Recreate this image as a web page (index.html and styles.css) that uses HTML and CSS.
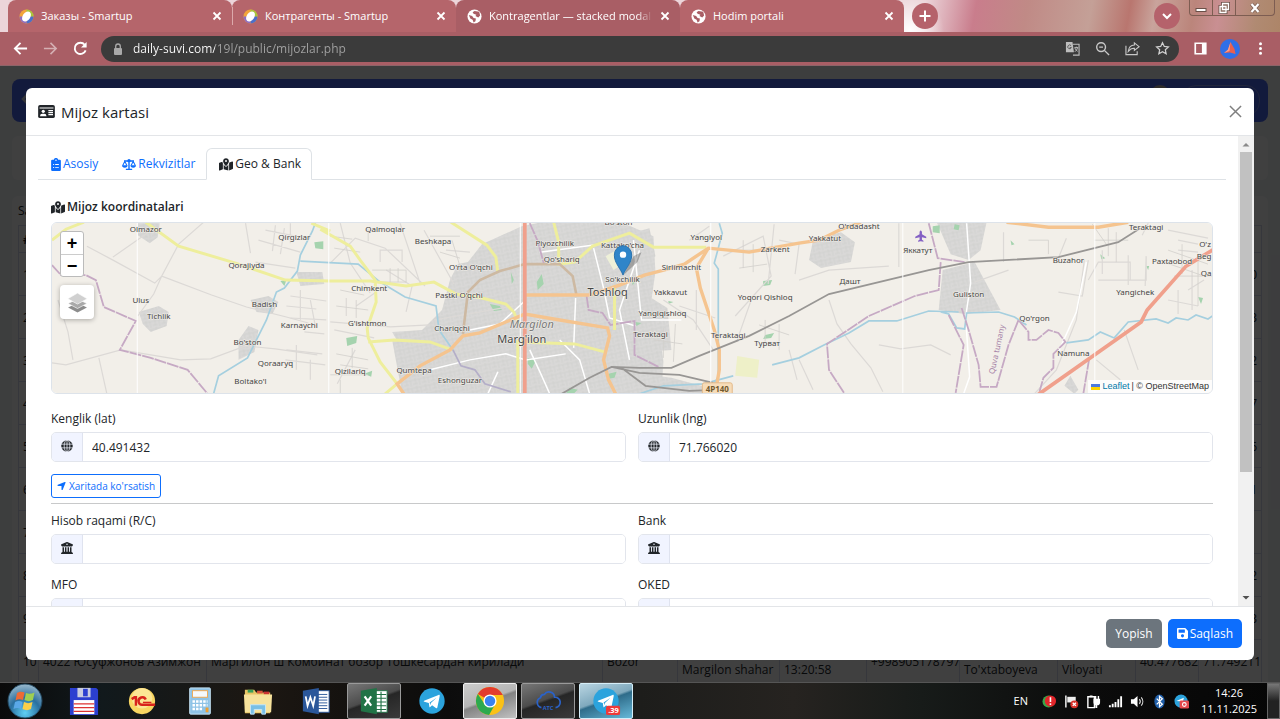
FILE: index.html
```html
<!DOCTYPE html>
<html lang="uz">
<head>
    <meta charset="UTF-8">
    <meta name="viewport" content="width=device-width, initial-scale=1.0">
    <title>Mijozlar</title>
    <link rel="stylesheet" href="styles.css">
</head>
<body>

    <!-- Ikonkalar -->
    <svg class="sprite" aria-hidden="true">
        <symbol id="i-close" viewBox="0 0 10 10"><path d="M1.500 1.500l7 7M8.500 1.500l-7 7" stroke="#fff" stroke-width="1.800" fill="none"/></symbol>
        <symbol id="i-smartup" viewBox="0 0 16 16">
            <circle cx="8" cy="8" r="7.500" fill="#f2a53a"/>
            <path d="M8 .5A7.500 7.500 0 0 1 15.500 8L8 8z" fill="#a7c63c"/>
            <path d="M15.500 8A7.500 7.500 0 0 1 8 15.500L8 8z" fill="#4c6fc9"/>
            <path d="M8 15.500A7.500 7.500 0 0 1 .5 8L8 8z" fill="#8f6fc0"/>
            <ellipse cx="8" cy="8" rx="4" ry="6" transform="rotate(35 8 8)" fill="#fff"/>
        </symbol>
        <symbol id="i-world" viewBox="0 0 16 16">
            <circle cx="8" cy="8" r="7.500" fill="#fff"/>
            <path d="M2 6.500l3.500 1 1.500 2 2.500.5-.5 3-2 1.500-1-3-2.500-1.500zM8 2l5 1 1 4-2 2-3-1.500 1-1.500-3-1-1-1.500z" fill="#a95e65"/>
        </symbol>
        <symbol id="i-globe" viewBox="0 0 16 16">
            <circle cx="8" cy="8" r="7.700" fill="currentColor"/>
            <path d="M0 5.500h16M0 10.500h16M8 0v16" stroke="#f1f4ff" stroke-width="1" fill="none"/>
            <ellipse cx="8" cy="8" rx="3.800" ry="8" stroke="#f1f4ff" stroke-width="1" fill="none"/>
        </symbol>
        <symbol id="i-bank" viewBox="0 0 512 512"><path fill="currentColor" fill-rule="evenodd" d="M243.400 2.600l-224 96c-14 6-21.800 21-18.700 35.800S16.800 160 32 160v8c0 13.300 10.700 24 24 24H456c13.300 0 24-10.700 24-24v-8c15.200 0 28.300-10.700 31.300-25.600s-4.800-29.900-18.700-35.800l-224-96c-8-3.400-17.200-3.400-25.200 0zM128 224H64V420.300c-.6 .3-1.200 .7-1.800 1.100l-48 32c-11.700 7.800-17 22.400-12.900 35.900S17.900 512 32 512H480c14.100 0 26.500-9.200 30.600-22.700s-1.100-28.100-12.900-35.900l-48-32c-.6-.4-1.200-.7-1.800-1.100V224H384V416H344V224H280V416H232V224H168V416H128V224zM256 64a32 32 0 1 1 0 64 32 32 0 1 1 0-64z"/></symbol>
        <symbol id="i-map" viewBox="0 0 576 512"><path fill="currentColor" fill-rule="evenodd" d="M408 120c0 54.600-73.100 151.900-105.200 192c-7.700 9.600-22 9.600-29.600 0C241.100 271.900 168 174.600 168 120C168 53.700 221.700 0 288 0s120 53.700 120 120zm8 80.400c3.500-6.900 6.700-13.800 9.600-20.600c.5-1.200 1-2.500 1.500-3.700l116-46.400C558.900 123.400 576 135 576 152V422.800c0 9.800-6 18.600-15.100 22.300L416 503V200.400zM137.600 138.300c2.400 14.100 7.200 28.300 12.800 41.500c2.900 6.800 6.100 13.700 9.600 20.600V451.800L32.900 502.700C17.100 509 0 497.400 0 480.400V209.600c0-9.800 6-18.600 15.100-22.300l122.600-49zM327.800 332c13.900-17.400 35.700-45.700 56.200-77V504.300L192 449.400V255c20.500 31.300 42.300 59.600 56.200 77c20.500 25.600 59.100 25.600 79.600 0zM288 152a40 40 0 1 0 0-80 40 40 0 1 0 0 80z"/></symbol>
        <symbol id="i-arrow" viewBox="0 0 448 512"><path fill="currentColor" d="M429.600 92.100c4.900-11.900 2.100-25.600-7-34.700s-22.800-11.900-34.700-7l-352 144c-14.200 5.800-22.200 20.800-19.300 35.800s16.100 25.800 31.400 25.800H224V432c0 15.300 10.800 28.400 25.800 31.400s30-5.100 35.800-19.300l144-352z"/></symbol>
        <symbol id="i-save" viewBox="0 32 448 448"><path fill="currentColor" d="M433.941 129.941l-83.882-83.882A48 48 0 0 0 316.118 32H48C21.490 32 0 53.490 0 80v352c0 26.510 21.490 48 48 48h352c26.510 0 48-21.490 48-48V163.882a48 48 0 0 0-14.059-33.941zM224 416c-35.346 0-64-28.654-64-64 0-35.346 28.654-64 64-64s64 28.654 64 64c0 35.346-28.654 64-64 64zm96-304.520V212c0 6.627-5.373 12-12 12H76c-6.627 0-12-5.373-12-12V108c0-6.627 5.373-12 12-12h228.520c3.183 0 6.235 1.264 8.485 3.515l3.480 3.480A11.996 11.996 0 0 1 320 111.480z"/></symbol>
        <symbol id="i-clip" viewBox="0 0 12 16">
            <path fill="currentColor" fill-rule="evenodd" d="M1.500 2H3.300a2.800 2.800 0 0 1 5.400 0H10.500A1.500 1.500 0 0 1 12 3.500v11a1.500 1.500 0 0 1-1.500 1.500h-9A1.500 1.500 0 0 1 0 14.500v-11A1.500 1.500 0 0 1 1.500 2zM6 1.800a.9.9 0 1 0 0 1.800.9.900 0 0 0 0-1.800zM2.500 7.500v1.200h1.200V7.500zM5 7.500v1h4.500v-1zM2.500 11.200v1.200h1.200v-1.200zM5 11.300v1h4.500v-1z"/>
        </symbol>
        <symbol id="i-scale" viewBox="0 0 20 16">
            <path fill="none" stroke="currentColor" stroke-width="2" d="M10 2v12.800M3 3h14M5.500 15h9"/>
            <circle cx="10" cy="2.500" r="2.400" fill="currentColor"/>
            <path fill="none" stroke="currentColor" stroke-width="1.500" d="M1 9.500L4 3.500l3 6M13 9.500l3-6 3 6"/>
            <path fill="currentColor" d="M0 9h8a4 3.500 0 0 1-8 0zM12 9h8a4 3.500 0 0 1-8 0z"/>
        </symbol>
        <symbol id="i-card" viewBox="0 0 18 14">
            <rect width="18" height="14" rx="2" fill="currentColor"/>
            <path d="M1.500 3.300h15M11 6h5M11 8.200h5M11 10.400h5" stroke="#fff" stroke-width="1.200"/>
            <circle cx="5.500" cy="6.800" r="1.700" fill="#fff"/>
            <path d="M2 12a2.500 2.500 0 0 1 2.500-2.500h2A2.500 2.500 0 0 1 9 12z" fill="#fff"/>
        </symbol>
        <symbol id="i-telegram" viewBox="0 0 28 28">
            <circle cx="14" cy="14" r="13.500" fill="#2ba3dd"/>
            <path d="M5.500 13.700L21 7.500c.9-.3 1.400.3 1.200 1.300l-2.500 12c-.2.900-.9 1.100-1.600.6l-4-3-2 2c-.4.400-.8.300-.9-.3l-.6-3.900-4.800-1.500c-.8-.3-.8-.8-.3-1zM11.500 15.600l.7 3 .6-2.500 6-5.600z" fill="#fff"/>
        </symbol>
    </svg>

    <!-- Brauzer -->
    <header class="browser">
        <div class="tabstrip">
            <div class="tab">
                <svg class="favicon"><use href="#i-smartup"/></svg>
                <span class="tab-title">Заказы - Smartup</span>
                <button class="tab-close" aria-label="Close"><svg><use href="#i-close"/></svg></button>
            </div>
            <div class="tab tab-sep">
                <svg class="favicon"><use href="#i-smartup"/></svg>
                <span class="tab-title">Контрагенты - Smartup</span>
                <button class="tab-close" aria-label="Close"><svg><use href="#i-close"/></svg></button>
            </div>
            <div class="tab tab-active">
                <svg class="favicon"><use href="#i-world"/></svg>
                <span class="tab-title tab-fade">Kontragentlar — stacked modal (</span>
                <button class="tab-close" aria-label="Close"><svg><use href="#i-close"/></svg></button>
            </div>
            <div class="tab">
                <svg class="favicon"><use href="#i-world"/></svg>
                <span class="tab-title">Hodim portali</span>
                <button class="tab-close" aria-label="Close"><svg><use href="#i-close"/></svg></button>
            </div>
            <button class="round-btn" aria-label="New tab"><svg viewBox="0 0 12 12"><path d="M6 .5v11M.5 6h11" stroke="#fff" stroke-width="2"/></svg></button>
            <div class="strip-right">
                <button class="round-btn" aria-label="Search tabs"><svg viewBox="0 0 12 12"><path d="M2 4l4 4 4-4" stroke="#fff" stroke-width="2" fill="none"/></svg></button>
                <div class="win-controls">
                    <button aria-label="Minimize"><svg viewBox="0 0 14 12"><rect x="2" y="6.500" width="10" height="3" fill="#fff" stroke="#6b5048"/></svg></button>
                    <button aria-label="Restore"><svg viewBox="0 0 14 12"><path d="M5.500 1.500h6v6h-6zM3 4.500h6v6H3z" fill="none" stroke="#6b5048" stroke-width="3"/><path d="M5.500 1.500h6v6h-6zM3 4.500h6v6H3z" fill="#8d6e62" stroke="#fff" stroke-width="1.300"/></svg></button>
                    <button class="win-close" aria-label="Close window"><svg viewBox="0 0 14 12"><path d="M3.500 2l7 8M10.500 2l-7 8" stroke="#7d6055" stroke-width="3.600"/><path d="M3.500 2l7 8M10.500 2l-7 8" stroke="#fff" stroke-width="2.200"/></svg></button>
                </div>
            </div>
        </div>

        <div class="toolbar">
            <button class="tool" aria-label="Back"><svg viewBox="0 0 16 16"><path d="M15 8H2.500M8 2L2 8l6 6" fill="none" stroke="#fff" stroke-width="2"/></svg></button>
            <button class="tool tool-off" aria-label="Forward"><svg viewBox="0 0 16 16"><path d="M1 8h12.500M8 2l6 6-6 6" fill="none" stroke="#fff" stroke-width="1.700"/></svg></button>
            <button class="tool" aria-label="Reload"><svg viewBox="0 0 16 16"><path d="M13.500 10A6 6 0 1 1 12.500 4" fill="none" stroke="#fff" stroke-width="2"/><path d="M14.500 1v6h-6z" fill="#fff"/></svg></button>
            <div class="omnibox">
                <svg class="lock" viewBox="0 0 10 12"><rect x="1" y="5" width="8" height="7" rx="1" fill="#a9a9a9"/><path d="M2.700 5V3.300a2.300 2.300 0 0 1 4.600 0V5" fill="none" stroke="#a9a9a9" stroke-width="1.300"/></svg>
                <input class="address" type="text" aria-label="Address" value="daily-suvi.com/19l/public/mijozlar.php">
                <button class="tool" aria-label="Translate"><svg viewBox="0 0 16 16"><path d="M1 1h7l1.500 11H1z" fill="#bdbdbd"/><path d="M8.500 3.500H15V15H8.500" fill="none" stroke="#bdbdbd" stroke-width="1.200"/><path d="M6.500 5a2 2 0 1 0 .3 2H5" fill="none" stroke="#555" stroke-width="1"/><path d="M10 7h4M12 6v1M13.500 7c-.5 2-1.500 3.500-3 4.500M10.500 7.500c.5 1.500 1.500 2.500 3 3.500" stroke="#bdbdbd" fill="none"/></svg></button>
                <button class="tool" aria-label="Zoom"><svg viewBox="0 0 16 16"><circle cx="6.500" cy="6.500" r="4.700" fill="none" stroke="#c8c8c8" stroke-width="1.500"/><path d="M10 10l5 5M4.500 6.500h4" stroke="#c8c8c8" stroke-width="1.500"/></svg></button>
                <button class="tool" aria-label="Share"><svg viewBox="0 0 16 16"><path d="M1 5v9.500h12V11M10 2l5 4-5 4V7.700C7 7.500 5 9 3.500 11 4 7 6.500 4.500 10 4.300z" fill="none" stroke="#c8c8c8" stroke-width="1.200"/></svg></button>
                <button class="tool" aria-label="Bookmark"><svg viewBox="0 0 16 16"><path d="M8 1.800l1.900 4 4.400.5-3.300 3 .9 4.400L8 11.500l-3.900 2.200.9-4.400-3.300-3 4.400-.5z" fill="none" stroke="#d0d0d0" stroke-width="1.300"/></svg></button>
            </div>
            <button class="tool" aria-label="Side panel"><svg viewBox="0 0 16 16"><path fill="#fff" fill-rule="evenodd" d="M1.500 1.500h13v13h-13zM3.300 3.300v9.400h6.200V3.300z"/></svg></button>
            <button class="tool avatar" aria-label="Profile"><svg viewBox="0 0 20 20"><circle cx="10" cy="10" r="10" fill="#2f6fe8"/><path d="M10.500 3L8 11l-4 3 6-.5 5.500 1.500-1-5z" fill="#e8604f"/><path d="M10.500 3L9.500 12l-5.500 2 4-3.500z" fill="#ff9c8a"/></svg></button>
            <button class="tool" aria-label="Menu"><svg viewBox="0 0 16 16"><circle cx="8" cy="3" r="1.600" fill="#fff"/><circle cx="8" cy="8" r="1.600" fill="#fff"/><circle cx="8" cy="13" r="1.600" fill="#fff"/></svg></button>
        </div>
    </header>

    <main class="page">
        <!-- Orqa fon: mijozlar jadvali -->
        <div class="page-back">
            <div class="navbar">
                <svg class="nav-back" viewBox="0 0 12 14"><path d="M8 2L3 7l5 5" fill="none" stroke="#cfd3e6" stroke-width="2.500"/></svg>
                <span class="nav-user"></span>
                <span class="nav-pill"></span>
            </div>
            <div class="card card-filter"></div>
            <div class="card card-table">
                <div class="card-title">Sahifa</div>
                <table class="clients">
                    <colgroup>
                        <col class="c-num"><col class="c-name"><col><col class="c-obj"><col class="c-city"><col class="c-time"><col class="c-phone"><col class="c-agent"><col class="c-reg"><col class="c-geo"><col class="c-geo">
                    </colgroup>
                    <tr><th>#</th><th></th><th></th><th></th><th></th><th></th><th></th><th></th><th></th><th></th><th></th></tr>
                    <tr><td>1</td><td></td><td></td><td></td><td></td><td></td><td></td><td></td><td></td><td></td><td class="num">0</td></tr>
                    <tr><td>2</td><td></td><td></td><td></td><td></td><td></td><td></td><td></td><td></td><td></td><td class="num">3</td></tr>
                    <tr><td>3</td><td></td><td></td><td></td><td></td><td></td><td></td><td></td><td></td><td></td><td class="num">2</td></tr>
                    <tr><td>4</td><td></td><td></td><td></td><td></td><td></td><td></td><td></td><td></td><td></td><td class="num">7</td></tr>
                    <tr><td>5</td><td></td><td></td><td></td><td></td><td></td><td></td><td></td><td></td><td></td><td class="num">6</td></tr>
                    <tr><td>6</td><td></td><td></td><td></td><td></td><td></td><td></td><td></td><td></td><td></td><td class="num">1</td></tr>
                    <tr><td>7</td><td></td><td></td><td></td><td></td><td></td><td></td><td></td><td></td><td></td><td></td></tr>
                    <tr><td>8</td><td></td><td></td><td></td><td></td><td></td><td></td><td></td><td></td><td></td><td class="num">2</td></tr>
                    <tr><td>9</td><td></td><td></td><td></td><td></td><td></td><td></td><td></td><td></td><td></td><td class="num">3</td></tr>
                    <tr><td>10</td><td>4022 Юсуфжонов Азимжон</td><td>Маргилон ш Комбинат бозор Тошкесардан кирилади</td><td>Bozor</td><td>Farg'ona<br>Margilon shahar</td><td>11.11.2025<br>13:20:58</td><td>+998905178797</td><td>Dilnoza<br>To'xtaboyeva</td><td>Farg'ona<br>Viloyati</td><td class="num">40.477682</td><td class="num">71.749211</td></tr>
                </table>
            </div>
        </div>

        <div class="backdrop">
            <div class="modal" role="dialog" aria-labelledby="modalTitle">
                <div class="modal-header">
                    <svg class="title-icon"><use href="#i-card"/></svg>
                    <h5 class="modal-title" id="modalTitle">Mijoz kartasi</h5>
                    <button class="btn-close" aria-label="Yopish"><svg viewBox="0 0 14 14"><path d="M1 1l12 12M13 1L1 13" stroke="#7f7f7f" stroke-width="1.600"/></svg></button>
                </div>

                <div class="modal-main">
                    <div class="modal-body">
                        <nav class="nav-tabs">
                            <a class="nav-link" href="#asosiy"><svg class="ic-clip"><use href="#i-clip"/></svg>Asosiy</a>
                            <a class="nav-link" href="#rekvizitlar"><svg class="ic-wide"><use href="#i-scale"/></svg>Rekvizitlar</a>
                            <a class="nav-link active" href="#geo"><svg class="ic-wide"><use href="#i-map"/></svg>Geo &amp; Bank</a>
                        </nav>

                        <div class="tab-pane">
                            <h6 class="section-title"><svg class="ic-wide"><use href="#i-map"/></svg>Mijoz koordinatalari</h6>

                            <div class="map">
                                <svg class="map-canvas" viewBox="51 222 1163 172" preserveAspectRatio="xMidYMid slice">
                                    <defs>
                                        <pattern id="streets" width="9" height="8" patternUnits="userSpaceOnUse" patternTransform="rotate(-12)">
                                            <rect width="9" height="8" fill="#d9d8d7"/>
                                            <path d="M0 2h9M0 6h5M3 0v6M7 2v6" stroke="#cfcecd" stroke-width=".7"/>
                                        </pattern>
                                    </defs>
                                    <rect x="51" y="222" width="1163" height="172" fill="#f2efe9"/>

                                    <!-- aholi punktlari -->
                                    <g fill="url(#streets)">
                                        <path d="M468 262l14-18 40-18 20-4h80l32 14 2 36-4 28 8 28 4 34-2 32H430l-20-30-10-18-8-14 30-2 20-20 8-30 8-16z"/>
                                        <path d="M392 340l40-4 20 20-14 38h-36z"/>
                                        <path d="M620 236l30-8 6 28-24 14zM632 306l20-8 16 10 4 42-30 2z"/>
                                        <path d="M814 240l28-8 14 10-4 20-30 6-12-8z"/>
                                        <path d="M938 222h50l-6 28-12 10-18-6z"/>
                                        <path d="M944 270l32-8 12 22 14 26-36 4-26-4z"/>
                                        <path d="M137 223h22l-2 14-8 6-12-8zM138 312l20-6 10 6-2 14-16 6-8-8zM250 300l18-4 10 6-6 12-16-2zM238 340l10-14 10 4-4 22-16 8zM296 272h26l2 12-24 2z"/>
                                        <path d="M1066 386l6-10 8 14-4 4zM562 378l30-10 80 10 30 8 10 8H558z"/>
                                    </g>

                                    <!-- dalalar va parklar -->
                                    <g fill="#a5d3ae">
                                        <path d="M314 242l9-1v8l-8-1zM280 281l6-1-2 6zM346 338l11-2-1 7-9 3zM364 374l8-3-1 6zM490 304l10 2 2 4-8 1zM537 282l5-8 2 10-6 6zM511 272l3 8-2 4zM528 358l8 3-4 8-4-5zM632 278l4 4-3 3zM764 281l9-1-2 5-7 1zM766 335l9-2-3 5-8 1zM934 226l7-1v8l-7-1zM956 224l5 1-1 5-5-1zM1012 240l4 4-3 1zM1102 254l5 4-4 1zM1148 266h3l-1 4zM1200 297l5 1-2 6zM570 388l8 2-4 4h-8zM609 374l8-2-2 6-6 1zM636 322l6 1-5 3zM669 301l5 1-5 2z"/>
                                    </g>
                                    <path d="M738 356l22 4-2 18-22-2z" fill="#eef0c8"/>
                                    <path d="M606 256l14-8 6 14-12 8z" fill="#eef0d8"/>

                                    <!-- kichik yo'llar -->
                                    <g fill="none" stroke="#dcd9d6" stroke-width="1.200">
                                        <path d="M86 246l28 15 40 22 7-7 17-32 25-22M112 257l40-28M161 276l50 19 35 12 40 10 22 6M161 276l-8 18-16 22M51 363l14 2 55-15 60 10 30-1 35-13 30 3 42 6M57 300l10 32 5 28M98 358l8 36"/>
                                        <path d="M245 223l5 30M258 240l42 12M265 230l30 6M275 225l-3 26M284 228l-4 26M290 223v20M255 262l40 6M290 296l36 5M286 306l30 3M290 318l36 2M300 290v30M310 300l5 26M304 332l20 2M286 350l36 4M285 360l40 5M296 345v25M310 360v20"/>
                                        <path d="M331 262l24-24 30 10 40 38M340 223l10 40 20 30M356 306l20-14M330 322l60 5 40-2M334 330l40 8M355 350l-18 34M380 262v-12h22v12M386 270l26 16-6 26M400 223l20 60M424 230l30 54M446 250l24 2M434 320l80-14"/>
                                        <path d="M680 306l36 12M664 300l30 20 20 30M697 290v40M690 240l20-14M724 256l40-20 8 40-36 40M752 300l-14 40M775 224l-6 60M780 240l20 4-4 30M830 300l8 24 14 20 20 24 12 24M800 280l30-10 60-4M900 223v44M880 345l22 4 30-4 20 10M790 350l8 30M800 360l14 30"/>
                                        <path d="M1005 232v30M1060 258l8-20M1086 260l-8 60-20 50-22 24M1104 250v24M1060 292l24 4 6-36M1090 280l10-18h32v18M1100 280h48v-24M1130 285v-30M1148 256l-1 30M1150 223l-6 12M1180 240l20 4M1170 230l40 8M1180 250l20 2M1190 290l16-10M1170 300l30 6M1180 290v24M1194 270v40M1126 330l14 40M1098 360l24 20M1010 270l-34 12"/>
                                    </g>
                                    <g fill="none" stroke="#fff" stroke-width="1.500">
                                        <path d="M430 370l40-10 36-6 20 6 40-6M470 330l30-6 26-24M594 248l10 40 6 30 26 8M640 250l-20 60 10 50M560 340l20 20 10 34M530 350l12 26 8 18M576 298l-2 50M498 372l-10 22M634 240l8 80 40 0M540 252l60-8M968 223l4 60-5 34 4 60-6 17M1088 262l-10 50-18 40"/>
                                    </g>
                                    <g fill="none" stroke="#d2cfcc" stroke-width=".8">
                                        <path d="M330 236l22 3M334 248l26 4M368 241v-12M372 270h34v12h-30M390 268v16M398 268v14M340 290l24 5M336 306l32 4M346 298v18M356 300v18M336 354l32 6M340 365l28 4M352 348v20M430 236h30M452 240l8 26M440 252l20 6M330 375h38M340 380v14M655 340l28 4M664 328v30M676 324l-2 38M736 250h30M744 240v28M754 244v28M740 268l28-4M760 325l30 10M766 320v26M780 324v26M1030 240h20v14M1094 224l14 20M1096 240h34M1110 228v28M1118 232v30M1170 250l40 14M1166 262l40 14M1184 244v30M1176 276h38M1200 260v46"/>
                                    </g>

                                    <!-- suv -->
                                    <g fill="none" stroke="#a5cfdf" stroke-width="1.700">
                                        <path d="M315 223l-3 8-12 24-3 16-13 17-8 4-10 28-19 38-29 18-5 18M300 261l58 3 22 18 25 15 31 9 3 24 14 20M720 223l3 10-8 30 4 6v108l-10 16M773 365l27-7 25-13 25-12 20-12h28l32-10 30 1M942 312l8 2 8 14 8 1 2-16 32-1 16 5 12 8M1068 343l22-3 12-8 14 6 14-16 28-3 12 4 8-5 12 2 8-5 12 4 6-4 10 0M640 394l24-8 40-2 30-8"/>
                                        <path d="M453 350l8 16 14 4 10 14 26 8" stroke="#b4aec8"/>
                                    </g>

                                    <!-- tuman chegaralari -->
                                    <g fill="none" stroke="#c6a9c4" stroke-width="1.800" stroke-dasharray="12 1">
                                        <path d="M51 265l9 10h25l10 5 8 27 32 14-16 29 31 8 37 12 20 24M530 223l8 18 6 22M587 296l2 14 14 3 8 12 24-4v34l24 12M930 223l9 35 27 4M942 262l-2 28-24 6-46 20-42 28 2 26 15 23M950 315l15 30-8 48M963 308l7 22 10 35 2 22h16l12-42 10-25 10 12v8h8l12-10 10 3 7 9-12 12v14l-10 10-4 14M1091 358l-6 36"/>
                                    </g>

                                    <!-- katta yo'llar -->
                                    <g fill="none" stroke="#eeee9c" stroke-width="3">
                                        <path d="M51 240l14-11 18-7M145 222l33 24 57 17 50 17 45 1h40l36 5 28-4 22 12 26 4 24 6 8 8 5 12M320 229l30 17 10 14 15 20 1 22-9 26 1 10 12 24 17 22-12 10M368 342l26-2 36 2 22 8M451 222l36 23 9 12 2 15M554 222l5 20v22l16-2 18-16 37-13 24 14h53M518 340v54M521 342l54 2 30 8M311 223l19 8M615 285v45"/>
                                    </g>
                                    <g fill="none" stroke="#cdb9a2" stroke-width="2.600">
                                        <path d="M463 334l5-42 12-12 20-9 25-7h35l13 12 4 20"/>
                                    </g>
                                    <g fill="none" stroke="#f5c48f" stroke-width="3.400">
                                        <path d="M405 396l-8-12 23-18 30-16 13-14 17-3 45-19 35 6 48 8 2 8-6 24 5 20 8 16M525 295h65l30-10 25-10 23-6 17-5 24-16 41 4 50-9 20-3 20-10 22-8M709 248l-12 20 4 20 14 42 5 20v20l-4 24M1008 222l42 5h50l30-5"/>
                                    </g>
                                    <g fill="none" stroke="#f0a08c" stroke-width="3.800">
                                        <path d="M525 222v172M1038 396l105-74 6-12 39-44 28-17"/>
                                    </g>

                                    <!-- temir yo'l -->
                                    <g fill="none" stroke="#989694" stroke-width="1.800">
                                        <path d="M562 394l28-16 22-11 28 1h32l28-12 50-20 40-20 40-22 100-24 40-8 90-5 60-15 22-14M612 367l28 6 40 2 34 8M622 368l24 18 44 5 26-1"/>
                                    </g>

                                    <g stroke="#fff" stroke-width="1"><path d="M136.500 222v172M328.500 222v172M520.500 222v172M711.500 222v172M904 222v172M1096.500 222v172"/></g>

                                    <g class="places">
                                        <text x="145" y="232">Olmazor</text><text x="294" y="240">Qirgizlar</text>
                                        <text x="246" y="268">Qorajiyda</text><text x="140" y="303">Ulus</text>
                                        <text x="158" y="319">Tichlik</text><text x="264" y="307">Badish</text>
                                        <text x="299" y="328">Karnaychi</text><text x="247" y="345">Bo'ston</text>
                                        <text x="275" y="366">Qoraaryq</text><text x="250" y="384">Boltako'l</text>
                                        <text x="385" y="232">Qalmoqlar</text><text x="433" y="244">Beshkapa</text>
                                        <text x="471" y="270">O'rta O'qchi</text><text x="369" y="291">Chimkent</text>
                                        <text x="459" y="298">Pastki O'qchi</text><text x="367" y="326">G'ishtmon</text>
                                        <text x="452" y="331">Chariqchi</text><text x="350" y="374">Qizilariq</text>
                                        <text x="414" y="373">Qumtepa</text><text x="460" y="383">Eshonguzar</text>
                                        <text x="555" y="246">Piyozchilik</text><text x="562" y="262">Qo'shariq</text>
                                        <text x="623" y="248">Kattako'cha</text><text x="623" y="282">So'kchilik</text>
                                        <text x="619" y="225">Bo'ston</text>
                                        <text x="707" y="240">Yangiyol</text><text x="776" y="252">Zarkent</text>
                                        <text x="682" y="270">Sirlimachit</text><text x="671" y="295">Yakkavut</text>
                                        <text x="663" y="316">Yangiqishloq</text><text x="651" y="337">Teraktagi</text>
                                        <text x="729" y="338">Teraktagi</text><text x="766" y="300">Yoqori Qishloq</text>
                                        <text x="768" y="346">Турват</text><text x="851" y="284">Дашт</text>
                                        <text x="826" y="241">Yakkatut</text><text x="860" y="229">O'rdadasht</text>
                                        <text x="919" y="253">Яккатут</text><text x="970" y="297">Guliston</text>
                                        <text x="1070" y="263">Buzahor</text><text x="1036" y="321">Qo'rgon</text>
                                        <text x="1075" y="356">Namuna</text><text x="1148" y="230">Teraktagi</text>
                                        <text x="1174" y="264">Paxtaobod</text><text x="1137" y="295">Yangichek</text>
                                        <text x="1207" y="247">O'z</text><text x="1206" y="259">Beg</text><text x="1208" y="276">Qa</text>
                                        <text class="town" x="608" y="296">Toshloq</text>
                                        <text class="town town-it" x="532" y="328">Margilon</text>
                                        <text class="town" x="522" y="343">Marg'ilon</text>
                                        <text class="district" x="1001" y="350" transform="rotate(-78 1001 350)">Quva tumany</text>
                                    </g>

                                    <path d="M922 230l1.200 1.500v2.500l4.300 2.500v1.500l-4.300-1v2.500l1.500 1.200v1l-2.700-.6-2.700.6v-1l1.500-1.200v-2.500l-4.300 1V236.500l4.300-2.500v-2.500z" fill="#8461c4"/>
                                    <rect x="703" y="383" width="30" height="14" rx="2" fill="#f7dcb8" stroke="#e3b98a"/>
                                    <text class="shield" x="718" y="392">4P140</text>

                                    <!-- marker -->
                                    <path d="M624 275l14-13 4-10-8 4z" fill="#000" opacity=".25"/>
                                    <path d="M623.500 275c-2-6-8.700-12-8.700-20a8.700 9.500 0 0 1 17.400 0c0 8-6.700 14-8.700 20z" fill="#2f85c9" stroke="#2a72ad"/>
                                    <circle cx="623.500" cy="254.500" r="3.200" fill="#fff"/>
                                </svg>

                                <div class="map-controls">
                                    <div class="zoom">
                                        <button aria-label="Zoom in">+</button>
                                        <button aria-label="Zoom out">−</button>
                                    </div>
                                    <button class="layers" aria-label="Layers">
                                        <svg viewBox="0 0 20 20"><path d="M10 10.500l9 4.300-9 4.700-9-4.700z" fill="#8c8c8c"/><path d="M10 6.500l9 4.500-9 4.700L1 11z" fill="#a9a9a9" stroke="#fff" stroke-width=".6"/><path d="M10 1l9.300 5.500L10 11.500.7 6.500z" fill="#d0d0d0" stroke="#fff" stroke-width=".6"/></svg>
                                    </button>
                                </div>
                                <div class="attribution">
                                    <svg viewBox="0 0 9 6"><rect width="9" height="3" fill="#4c7be1"/><rect y="3" width="9" height="3" fill="#ffd500"/></svg>
                                    <a href="#leaflet">Leaflet</a> | © OpenStreetMap
                                </div>
                            </div>

                            <div class="form-row">
                                <div class="field">
                                    <label for="lat">Kenglik (lat)</label>
                                    <div class="input-group">
                                        <span class="addon"><svg><use href="#i-globe"/></svg></span>
                                        <input type="text" id="lat" value="40.491432">
                                    </div>
                                </div>
                                <div class="field">
                                    <label for="lng">Uzunlik (lng)</label>
                                    <div class="input-group">
                                        <span class="addon"><svg><use href="#i-globe"/></svg></span>
                                        <input type="text" id="lng" value="71.766020">
                                    </div>
                                </div>
                            </div>

                            <button class="btn-outline"><svg><use href="#i-arrow"/></svg>Xaritada ko'rsatish</button>

                            <hr class="divider">

                            <div class="form-row form-bank">
                                <div class="field">
                                    <label for="account">Hisob raqami (R/C)</label>
                                    <div class="input-group">
                                        <span class="addon"><svg><use href="#i-bank"/></svg></span>
                                        <input type="text" id="account">
                                    </div>
                                </div>
                                <div class="field">
                                    <label for="bank">Bank</label>
                                    <div class="input-group">
                                        <span class="addon"><svg><use href="#i-bank"/></svg></span>
                                        <input type="text" id="bank">
                                    </div>
                                </div>
                                <div class="field">
                                    <label for="mfo">MFO</label>
                                    <div class="input-group">
                                        <span class="addon"></span>
                                        <input type="text" id="mfo">
                                    </div>
                                </div>
                                <div class="field">
                                    <label for="oked">OKED</label>
                                    <div class="input-group">
                                        <span class="addon"></span>
                                        <input type="text" id="oked">
                                    </div>
                                </div>
                            </div>
                        </div>
                    </div>
                    <div class="scrollbar">
                        <svg viewBox="0 0 16 16"><path d="M4.500 10.500h7L8 7z" fill="#8a8a8a"/></svg>
                        <div class="scroll-track"><div class="scroll-thumb"></div></div>
                        <svg viewBox="0 0 16 16"><path d="M4.500 6h7L8 9.500z" fill="#505050"/></svg>
                    </div>
                </div>

                <div class="modal-footer">
                    <button class="btn btn-secondary">Yopish</button>
                    <button class="btn btn-primary"><svg><use href="#i-save"/></svg>Saqlash</button>
                </div>
            </div>
        </div>
    </main>

    <!-- Windows paneli -->
    <footer class="taskbar">
        <button class="start" aria-label="Start">
            <svg viewBox="0 0 36 36">
                <defs><radialGradient id="orb" cx=".5" cy=".85" r=".9"><stop offset="0" stop-color="#5fd0f5"/><stop offset=".5" stop-color="#2a6f9f"/><stop offset="1" stop-color="#a9c3d3"/></radialGradient></defs>
                <circle cx="18" cy="18" r="17" fill="url(#orb)" stroke="#21475f"/>
                <path d="M10 10c3-2 5-1.500 7.500-.5L16 17c-3-1-5-1-7.500.5z" fill="#ee6a35"/>
                <path d="M19 10c3 1 5 1 8.500-.5L26 17c-3 1.500-5 1.500-8.500 0z" fill="#9fcf52"/>
                <path d="M8 19c3-1.500 5-1.500 7.500 0L14 26c-3-1.500-5-1-7.500 0z" fill="#5aa8e8"/>
                <path d="M17 19c3 1.500 5 1.500 8.500 0L24 26c-3 1.500-5 1.500-8.500 0z" fill="#fbcf48"/>
            </svg>
        </button>
        <div class="apps">
            <button class="app" aria-label="Total Commander"><svg viewBox="0 0 32 32"><path d="M1 2h28l2 2v27H1z" fill="#2b3fd0"/><rect x="9" y="2" width="14" height="10" fill="#c9cde0"/><rect x="15" y="3" width="5" height="8" fill="#2b3fd0"/><rect x="5" y="15" width="22" height="15" fill="#fff"/><path d="M5 19h22M5 23h22M5 27h22" stroke="#d33" stroke-width="1.400"/></svg></button>
            <button class="app" aria-label="1C"><svg viewBox="0 0 32 32"><circle cx="16" cy="16" r="14" fill="#f8d662"/><circle cx="16" cy="13" r="11" fill="#fce694"/><path d="M5 14l3-2h1.500v9M20 14.500a4 4 0 1 0-3 5.500h13" fill="none" stroke="#d8231c" stroke-width="2.600"/><path d="M17 17.500h9" stroke="#d8231c" stroke-width="1.500"/></svg></button>
            <button class="app" aria-label="Calculator"><svg viewBox="0 0 32 32"><rect x="5" y="2" width="22" height="28" rx="1" fill="#8fc3e6" stroke="#c9e5f6"/><rect x="8" y="5" width="16" height="7" fill="#f5f9fc" stroke="#f0a850"/><path d="M8 16.500h16M8 20.500h16M8 24.500h11" stroke="#fff" stroke-width="2.600" stroke-dasharray="2.600 1.200"/><rect x="22" y="23" width="3" height="5" fill="#f0a030"/></svg></button>
            <button class="app" aria-label="Explorer"><svg viewBox="0 0 32 32"><path d="M2 4h10l2 3h15v22H2z" fill="#e9c666"/><path d="M5 4h6v3H5z" fill="#3aa05a"/><path d="M15 5h6v3h-6z" fill="#d8553c"/><path d="M22 6h6v3h-6z" fill="#c33"/><path d="M1 9h30l-1 19H2z" fill="#f7e29c"/><path d="M8 20h16v10h-4v-5h-8v5H8z" fill="#79bfe6" stroke="#c6e6f7"/></svg></button>
            <button class="app" aria-label="Word"><svg viewBox="0 0 32 32"><rect x="17" y="5" width="13" height="23" fill="#fff" stroke="#2b579a"/><path d="M18 9h10M18 12h10M18 15h10M18 18h10M18 21h10M18 24h10" stroke="#2b579a"/><path d="M2 5l17-3v28L2 27z" fill="#2b579a"/><path d="M5 11l2 10 3-9 3 9 2-10" fill="none" stroke="#fff" stroke-width="1.900"/></svg></button>
            <button class="app open" aria-label="Excel"><svg viewBox="0 0 32 32"><rect x="17" y="5" width="13" height="23" fill="#fff" stroke="#217346"/><path d="M18 9h11M18 13h11M18 17h11M18 21h11M18 25h11M23.500 6v22" stroke="#217346" stroke-width="1.200"/><path d="M2 5l17-3v28L2 27z" fill="#217346"/><path d="M6 11l7 10M13 11L6 21" stroke="#fff" stroke-width="2.300"/></svg></button>
            <button class="app" aria-label="Telegram"><svg viewBox="0 0 32 32"><use href="#i-telegram" x="2" y="2" width="28" height="28"/></svg></button>
            <button class="app open bright" aria-label="Chrome"><svg viewBox="0 0 32 32"><circle cx="16" cy="16" r="15" fill="#fbc116"/><path d="M16 16L3 8.500A15 15 0 0 1 29 8.500L29.500 9.500H16z" fill="#e33b2e"/><path d="M3 8.500A15 15 0 0 0 15 31l6.500-11.500L10 19z" fill="#2da94f"/><circle cx="16" cy="16" r="7" fill="#fff"/><circle cx="16" cy="16" r="5.600" fill="#3b82f0"/></svg></button>
            <button class="app open" aria-label="ATC"><svg viewBox="0 0 32 32"><path d="M9 23a5.500 5.500 0 0 1-1-10.500 4 4 0 0 1 4-3.500 6 6 0 0 1 11 3A5.500 5.500 0 0 1 24 23" fill="none" stroke="#2a62c8" stroke-width="1.800"/><text class="atc" x="16" y="26">ATC</text></svg></button>
            <button class="app open blue" aria-label="Telegram 39"><svg viewBox="0 0 32 32"><use href="#i-telegram" x="2" y="2" width="28" height="28"/><rect x="16" y="21" width="15" height="10" rx="2" fill="#ee3a3a"/><text class="count" x="24" y="29">.39</text></svg></button>
        </div>
        <div class="tray">
            <span class="lang">EN</span>
            <svg viewBox="0 0 16 16"><circle cx="7" cy="8" r="6.500" fill="#3aa64a"/><circle cx="9" cy="7.500" r="6" fill="#e2262b"/><path d="M9 3.500v5M9 9.800v1.800" stroke="#fff" stroke-width="1.700"/></svg>
            <svg viewBox="0 0 16 16"><path d="M2 1.500v13" stroke="#fff" stroke-width="1.500"/><path d="M3.500 3h9v6h-9z" fill="#eee"/><circle cx="11" cy="11" r="4.200" fill="#d8322a"/><path d="M9.300 9.300l3.400 3.400M12.700 9.300l-3.400 3.400" stroke="#fff" stroke-width="1.400"/></svg>
            <svg viewBox="0 0 16 16"><path d="M2 3h7v11.500H2z" fill="none" stroke="#fff" stroke-width="1.500"/><path d="M4 1.500h3v2H4zM8 5h7v4a3 3 0 0 1-3 3v3h-2v-3a3 3 0 0 1-2-3zM9.500 2h1.500v3H9.500zM12.500 2H14v3h-1.500z" fill="#fff"/></svg>
            <svg viewBox="0 0 16 16"><path d="M1 12h2v2H1zM4 10.500h2V14H4zM7 8.500h2V14H7zM10 5.500h2V14h-2zM13 2.500h2V14h-2z" fill="#fff"/></svg>
            <svg viewBox="0 0 16 16"><path d="M1 5.500h3L8 2v12l-4-3.500H1z" fill="#fff"/><path d="M10 5.500a4 4 0 0 1 0 5M12 3.500a7 7 0 0 1 0 9" fill="none" stroke="#ddd" stroke-width="1.200"/></svg>
            <svg viewBox="0 0 16 16"><ellipse cx="8" cy="8" rx="5.500" ry="7.500" fill="#1f5ea8"/><path d="M5 5l6 6-3 2.500v-11L11 5l-6 6" fill="none" stroke="#fff" stroke-width="1.300"/></svg>
            <svg viewBox="0 0 16 16"><circle cx="7.500" cy="7.500" r="7" fill="#2ba3dd"/><path d="M2.500 7.500l8-3.500-1 4z" fill="#fff"/><rect x="6" y="7" width="10" height="8.500" rx="1.500" fill="#e5484d"/><circle cx="11" cy="11.200" r="2" fill="none" stroke="#fff" stroke-width="1.100"/></svg>
            <div class="clock"><span>14:26</span><span>11.11.2025</span></div>
            <button class="peek" aria-label="Show desktop"></button>
        </div>
    </footer>

</body>
</html>
```
FILE: styles.css
```css
* {
    box-sizing: border-box;
}
body {
    font-family: "Open Sans", "Noto Sans", sans-serif;
    font-size: 12px;
    line-height: 18px;
    color: #212529;
    display: flex;
    flex-direction: column;
    height: 100vh;
    margin: 0;
    overflow: hidden;
}
button {
    font-family: inherit;
    border: none;
    background: none;
    padding: 0;
    cursor: pointer;
}
svg {
    display: block;
    flex: none;
}
.sprite {
    position: absolute;
    width: 0;
    height: 0;
}

/* Browser */
.browser {
    flex: none;
}
.tabstrip {
    display: flex;
    height: 32px;
    padding-left: 8px;
    background:
        radial-gradient(circle at 910px 30px, #fff 0, rgba(255, 255, 255, 0) 34px),
        linear-gradient(100deg, #ecd5da 0, #ecd5da 72%, #c97d8c 76%, #c08a86 80%, #c4a097 85%, #b9766f 88%, #c9a49c 90%, #bb857b 93%, #c98f92 95%, #b08a72 98%, #ad8568 100%);
}
.tab {
    display: flex;
    align-items: center;
    gap: 7px;
    width: 224px;
    padding: 0 10px 0 11px;
    background-color: #b5656b;
    border-radius: 8px 8px 0 0;
}
.tab-sep {
    background-image: linear-gradient(#dca9ab, #dca9ab);
    background-size: 1px 18px;
    background-position: 0 7px;
    background-repeat: no-repeat;
}
.tab-active {
    background-color: #a95e65;
}
.favicon {
    width: 15px;
    height: 15px;
}
.tab-title {
    flex: 1;
    overflow: hidden;
    white-space: nowrap;
    font-size: 11px;
    color: #fff;
}
.tab-fade {
    -webkit-mask-image: linear-gradient(90deg, #000 90%, transparent);
    mask-image: linear-gradient(90deg, #000 90%, transparent);
}
.tab-close,
.tab-close svg {
    width: 10px;
    height: 10px;
}
.round-btn {
    display: flex;
    align-items: center;
    justify-content: center;
    width: 26px;
    height: 26px;
    margin: 3px 0 0 8px;
    border-radius: 50%;
    background-color: #b5626b;
}
.round-btn svg {
    width: 12px;
    height: 12px;
}
.strip-right {
    display: flex;
    gap: 9px;
    margin-left: auto;
    padding-right: 5px;
}
.win-controls {
    display: flex;
    height: 16px;
    border: 1px solid #7d5d52;
    border-top: none;
    border-radius: 0 0 4px 4px;
}
.win-controls button {
    display: flex;
    align-items: center;
    justify-content: center;
    width: 23px;
    border-right: 1px solid #7d5d52;
}
.win-controls .win-close {
    width: 38px;
    border-right: none;
}
.win-controls svg {
    width: 14px;
    height: 12px;
}
.toolbar {
    display: flex;
    align-items: center;
    height: 34px;
    padding: 0 5px;
    background-color: #a95e65;
    border-bottom: 1px solid #8d6469;
}
.tool {
    display: flex;
    align-items: center;
    justify-content: center;
    width: 30px;
    height: 26px;
}
.tool svg {
    width: 15px;
    height: 15px;
}
.tool-off {
    opacity: 0.5;
}
.avatar svg {
    width: 20px;
    height: 20px;
}
.omnibox {
    display: flex;
    flex: 1;
    align-items: center;
    height: 26px;
    margin: 0 6px;
    padding: 0 2px 0 12px;
    border-radius: 13px;
    background-color: #3b3b3b;
}
.lock {
    width: 10px;
    height: 12px;
    margin-right: 10px;
}
.address {
    flex: 1;
    padding: 0;
    border: none;
    outline: none;
    font-family: inherit;
    font-size: 12px;
    background: linear-gradient(90deg, #fff 82px, #a3a3a3 82px);
    -webkit-background-clip: text;
    background-clip: text;
    -webkit-text-fill-color: transparent;
}

/* Page behind the modal */
.page {
    position: relative;
    flex: 1;
    min-height: 0;
    overflow: hidden;
    background-color: #f3f5f8;
}
.page-back {
    padding: 13px 12px 0;
}
.navbar {
    display: flex;
    gap: 12px;
    height: 43px;
    padding: 6px 8px;
    border-radius: 8px;
    background-color: #4a68f0;
}
.nav-back {
    width: 12px;
    height: 28px;
}
.nav-user {
    width: 20px;
    height: 20px;
    margin-left: auto;
    border-radius: 50%;
    background-color: #b9b0a8;
}
.nav-pill {
    width: 78px;
    border: 1px solid #7f92e8;
    border-radius: 14px;
}
.card {
    background-color: #fff;
    border-radius: 6px;
}
.card-filter {
    height: 44px;
    margin-top: 14px;
}
.card-table {
    height: 520px;
    margin-top: 16px;
    padding: 6px 6px 0;
}
.card-title {
    height: 23px;
}
.clients {
    width: 100%;
    table-layout: fixed;
    border-collapse: collapse;
    line-height: 17px;
}
.clients th,
.clients td {
    height: 43px;
    padding: 0 4px;
    border: 1px solid #d5daf0;
    text-align: left;
    white-space: nowrap;
}
.clients th {
    height: 27px;
}
.clients .num {
    text-align: right;
}
.c-num { width: 20px; }
.c-name { width: 168px; }
.c-obj { width: 75px; }
.c-city { width: 102px; }
.c-time { width: 87px; }
.c-phone { width: 93px; }
.c-agent { width: 98px; }
.c-reg { width: 78px; }
.c-geo { width: 63px; }

/* Modal */
.backdrop {
    position: absolute;
    inset: 0;
    display: flex;
    padding: 22px 26px;
    background-color: rgba(0, 0, 0, 0.75);
}
.modal {
    display: flex;
    flex: 1;
    flex-direction: column;
    min-width: 0;
    background-color: #fff;
    border-radius: 6px;
    overflow: hidden;
}
.modal-header {
    display: flex;
    align-items: center;
    gap: 6px;
    height: 48px;
    padding: 0 12px;
    border-bottom: 1px solid #e3e5e8;
}
.title-icon {
    width: 17px;
    height: 13px;
}
.modal-title {
    margin: 0;
    font-size: 15px;
    font-weight: 500;
}
.btn-close {
    margin-left: auto;
}
.btn-close svg {
    width: 13px;
    height: 13px;
}
.modal-main {
    display: flex;
    flex: 1;
    min-height: 0;
}
.modal-body {
    flex: 1;
    min-width: 0;
    padding: 12px;
    overflow: hidden;
}
.scrollbar {
    display: flex;
    flex-direction: column;
    width: 16px;
    background-color: #f1f1f1;
}
.scrollbar svg {
    width: 16px;
    height: 16px;
}
.scroll-track {
    flex: 1;
    padding: 0 2px;
}
.scroll-thumb {
    height: 73%;
    background-color: #c1c1c1;
}
.nav-tabs {
    display: flex;
    border-bottom: 1px solid #dee2e6;
}
.nav-link {
    display: flex;
    align-items: center;
    gap: 2px;
    height: 32px;
    margin-bottom: -1px;
    padding: 0 10px 0 12px;
    border: 1px solid transparent;
    border-radius: 6px 6px 0 0;
    color: #0d6efd;
    text-decoration: none;
}
.nav-link.active {
    color: #212529;
    background-color: #fff;
    border-color: #dee2e6 #dee2e6 #fff;
}
.ic-clip {
    width: 10px;
    height: 13px;
}
.ic-wide {
    width: 14px;
    height: 13px;
}
.tab-pane {
    padding: 18px 13px 0;
}
.section-title {
    display: flex;
    align-items: center;
    gap: 2px;
    margin: 0 0 6px;
    font-size: 12px;
    font-weight: 600;
}
.map {
    position: relative;
    height: 172px;
    margin-bottom: 16px;
    border: 1px solid #dde3ea;
    border-radius: 6px;
    overflow: hidden;
}
.map-canvas {
    width: 100%;
    height: 100%;
}
.places {
    font-family: "Noto Sans", sans-serif;
    font-size: 8px;
    fill: #444;
    stroke: #f2efe9;
    stroke-width: 1px;
    paint-order: stroke;
    text-anchor: middle;
}
.places .town {
    font-size: 11px;
}
.places .town-it {
    font-style: italic;
    fill: #777;
}
.places .district {
    fill: #a57fa6;
}
.shield {
    font-size: 8px;
    font-weight: bold;
    fill: #70592f;
    text-anchor: middle;
}
.map-controls {
    position: absolute;
    top: 8px;
    left: 8px;
}
.zoom {
    width: 24px;
    border: 1px solid #bbb;
    border-radius: 3px;
    background-color: #fff;
}
.zoom button {
    display: block;
    width: 22px;
    height: 22px;
    font: bold 18px/20px "Liberation Sans", Arial, sans-serif;
    color: #000;
}
.zoom button + button {
    border-top: 1px solid #ccc;
}
.layers {
    display: flex;
    align-items: center;
    justify-content: center;
    width: 34px;
    height: 34px;
    margin-top: 8px;
    border-radius: 4px;
    background-color: #fff;
    box-shadow: 0 1px 5px rgba(0, 0, 0, 0.3);
}
.layers svg {
    width: 21px;
    height: 21px;
}
.attribution {
    position: absolute;
    right: 0;
    bottom: 0;
    display: flex;
    align-items: center;
    gap: 2px;
    padding: 0 3px;
    font: 9px/13px "Liberation Sans", Arial, sans-serif;
    color: #333;
    background-color: rgba(255, 255, 255, 0.8);
}
.attribution svg {
    width: 9px;
    height: 6px;
}
.attribution a {
    color: #0078a8;
    text-decoration: none;
}
.form-row {
    display: grid;
    grid-template-columns: 1fr 1fr;
    gap: 12px;
}
.field label {
    display: block;
    margin-bottom: 4px;
}
.input-group {
    display: flex;
    height: 30px;
    border: 1px solid #e2e5ec;
    border-radius: 5px;
    overflow: hidden;
}
.addon {
    display: flex;
    justify-content: center;
    width: 31px;
    padding-top: 7px;
    background-color: #f1f4ff;
    border-right: 1px solid #dfe3ef;
}
.addon svg {
    width: 12px;
    height: 12px;
}
.input-group input {
    flex: 1;
    min-width: 0;
    padding: 0 9px;
    border: none;
    outline: none;
    font-family: inherit;
    font-size: 12px;
    color: #212529;
}
.btn-outline {
    display: flex;
    align-items: center;
    gap: 3px;
    height: 24px;
    margin-top: 12px;
    padding: 0 5px;
    border: 1px solid #0d6efd;
    border-radius: 3px;
    font-size: 10px;
    color: #0d6efd;
}
.btn-outline svg {
    width: 9px;
    height: 10px;
}
.divider {
    height: 1px;
    margin: 5px 0 8px;
    border: none;
    background-color: #c8c9ca;
}
.modal-footer {
    display: flex;
    align-items: center;
    justify-content: flex-end;
    gap: 6px;
    height: 54px;
    padding: 0 12px;
    border-top: 1px solid #e3e5e8;
}
.btn {
    display: flex;
    align-items: center;
    gap: 2px;
    height: 29px;
    padding: 0 9px;
    border-radius: 5px;
    font-size: 12px;
    color: #fff;
}
.btn svg {
    width: 11px;
    height: 11px;
}
.btn-secondary {
    background-color: #6c757d;
}
.btn-primary {
    background-color: #0d6efd;
}

/* Taskbar */
.taskbar {
    display: flex;
    flex: none;
    height: 37px;
    border-top: 1px solid #555;
    background: linear-gradient(90deg, #0a0a0a 0, #11191c 8%, #1c1712 20%, #0c0c0c 35%, #1d1d1b 50%, #262320 62%, #171b19 72%, #0b0b0b 85%, #060606 100%);
}
.start {
    width: 57px;
    padding-left: 7px;
}
.start svg {
    width: 36px;
    height: 36px;
}
.apps {
    display: flex;
    gap: 4px;
}
.app {
    display: flex;
    align-items: center;
    justify-content: center;
    width: 54px;
    height: 36px;
    border-radius: 2px;
}
.app svg {
    width: 30px;
    height: 30px;
}
.app.open {
    border: 1px solid #9a9a9a;
    background: linear-gradient(160deg, #777 0, #4c4c4c 45%, #262626 50%, #3a3a3a 100%);
}
.app.bright {
    border-color: #eee;
    background: linear-gradient(160deg, #ccc 0, #b5b5b5 45%, #838383 50%, #c2c2c2 100%);
}
.app.blue {
    border-color: #d5eef8;
    background: linear-gradient(160deg, #b9d5e2 0, #7fa9bd 45%, #2f6c8a 50%, #67b9d9 100%);
}
.atc {
    font-size: 6px;
    font-weight: bold;
    fill: #2a62c8;
    text-anchor: middle;
}
.count {
    font-size: 8px;
    font-weight: bold;
    fill: #fff;
    text-anchor: middle;
}
.tray {
    display: flex;
    align-items: center;
    gap: 7px;
    margin-left: auto;
    color: #fff;
}
.tray svg {
    width: 15px;
    height: 15px;
}
.lang {
    margin-right: 7px;
    font-size: 11px;
}
.clock {
    display: flex;
    flex-direction: column;
    align-items: center;
    width: 62px;
    margin-left: 2px;
    font-size: 11px;
    line-height: 16px;
}
.peek {
    width: 13px;
    height: 36px;
    border: 1px solid #666;
    background: linear-gradient(#777, #222 50%);
}
```
